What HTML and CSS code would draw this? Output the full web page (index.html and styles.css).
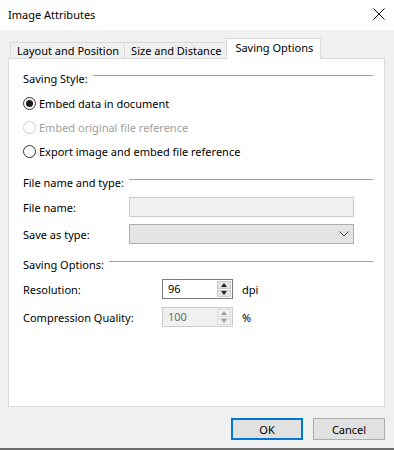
FILE: index.html
```html
<!DOCTYPE html>
<html lang="en">
<head>
    <meta charset="UTF-8">
    <title>Image Attributes</title>
    <link rel="stylesheet" href="styles.css">
</head>
<body>
    <div class="window">
        <div class="titlebar">
            <span class="title">Image Attributes</span>
            <svg class="close" width="12" height="12" viewBox="0 0 12 12">
                <path d="M0.5 0.5 L11.5 11.5 M11.5 0.5 L0.5 11.5" stroke="#000" stroke-width="1" fill="none"/>
            </svg>
        </div>

        <div class="body">
            <div class="tabs">
                <div class="tab">Layout and Position</div>
                <div class="tab">Size and Distance</div>
                <div class="tab active">Saving Options</div>
            </div>

            <div class="panel">
                <div class="group-header">
                    <span>Saving Style:</span>
                    <div class="rule"></div>
                </div>

                <div class="radios">
                    <label class="radio-row">
                        <span class="radio checked"></span>
                        <span>Embed data in document</span>
                    </label>
                    <label class="radio-row disabled">
                        <span class="radio"></span>
                        <span>Embed original file reference</span>
                    </label>
                    <label class="radio-row">
                        <span class="radio"></span>
                        <span>Export image and embed file reference</span>
                    </label>
                </div>

                <div class="group-header second">
                    <span>File name and type:</span>
                    <div class="rule"></div>
                </div>

                <div class="field-row first">
                    <span class="field-label">File name:</span>
                    <div class="text-box"></div>
                </div>
                <div class="field-row">
                    <span class="field-label">Save as type:</span>
                    <div class="combo">
                        <svg width="10" height="6" viewBox="0 0 10 6">
                            <path d="M0.5 0.5 L5 5 L9.5 0.5" stroke="#444" stroke-width="1" fill="none"/>
                        </svg>
                    </div>
                </div>

                <div class="group-header third">
                    <span>Saving Options:</span>
                    <div class="rule"></div>
                </div>

                <div class="field-row first">
                    <span class="field-label wide">Resolution:</span>
                    <div class="spin">
                        <span class="spin-value">96</span>
                        <div class="spin-buttons">
                            <span class="spin-btn"><i class="arrow up"></i></span>
                            <span class="spin-btn"><i class="arrow down"></i></span>
                        </div>
                    </div>
                    <span class="unit">dpi</span>
                </div>
                <div class="field-row spaced">
                    <span class="field-label wide">Compression Quality:</span>
                    <div class="spin disabled">
                        <span class="spin-value">100</span>
                        <div class="spin-buttons">
                            <span class="spin-btn"><i class="arrow up"></i></span>
                            <span class="spin-btn"><i class="arrow down"></i></span>
                        </div>
                    </div>
                    <span class="unit">%</span>
                </div>
            </div>

            <div class="buttons">
                <button class="btn default">OK</button>
                <button class="btn">Cancel</button>
            </div>
        </div>
    </div>
</body>
</html>
```

FILE: styles.css
```css
* {
    margin: 0;
    padding: 0;
    box-sizing: border-box;
}

body {
    font-family: "Noto Sans", "Open Sans", sans-serif;
    font-size: 11px;
    color: #000;
    background: #f0f0f0;
}

.window {
    width: 394px;
    height: 450px;
    display: flex;
    flex-direction: column;
    border-bottom: 2px solid #6b6b6b;
}

.titlebar {
    height: 30px;
    background: #ffffff;
    display: flex;
    align-items: center;
    justify-content: space-between;
    padding: 0 9px 2px 8px;
}

.body {
    flex: 1;
    background: #f0f0f0;
    padding-top: 8px;
}

.tabs {
    display: flex;
    align-items: flex-end;
    padding-left: 10px;
    height: 20px;
}

.tab {
    height: 16px;
    padding: 0 5px 0 6px;
    border: 1px solid #d9d9d9;
    border-bottom: none;
    border-right: none;
    line-height: 15px;
    background: #f0f0f0;
}

.tab.active {
    height: 21px;
    margin-bottom: -1px;
    padding: 0 7px 0 8px;
    background: #ffffff;
    border-right: 1px solid #d9d9d9;
    line-height: 18px;
    position: relative;
    z-index: 1;
}

.panel {
    height: 349px;
    margin: 0 9px 0 8px;
    background: #ffffff;
    border: 1px solid #d9d9d9;
    padding: 10px 11px 0 14px;
}

.group-header {
    height: 16px;
    display: flex;
    align-items: center;
    gap: 5px;
    padding-top: 2px;
}

.group-header.second {
    margin-top: 10px;
}

.group-header.third {
    margin-top: 11px;
}

.rule {
    flex: 1;
    height: 1px;
    background: #a0a0a0;
    margin-bottom: 5px;
}

.radios {
    margin-top: 6px;
}

.radio-row {
    height: 24px;
    display: flex;
    align-items: center;
    gap: 3px;
}

.radio {
    width: 13px;
    height: 13px;
    border: 1px solid #333;
    border-radius: 50%;
    display: flex;
    align-items: center;
    justify-content: center;
}

.radio.checked::after {
    content: "";
    width: 7px;
    height: 7px;
    border-radius: 50%;
    background: #1a1a1a;
}

.radio-row.disabled {
    color: #a0a0a0;
}

.radio-row.disabled .radio {
    border-color: #cccccc;
}

.field-row {
    height: 20px;
    display: flex;
    align-items: center;
    margin-top: 7px;
}

.field-row.first {
    margin-top: 8px;
}

.field-row.spaced {
    margin-top: 8px;
}

.field-label {
    width: 106px;
    flex-shrink: 0;
}

.field-label.wide {
    width: 139px;
}

.text-box {
    width: 225px;
    height: 20px;
    background: #f0f0f0;
    border: 1px solid #cccccc;
}

.combo {
    width: 225px;
    height: 20px;
    background: #e5e5e5;
    border: 1px solid #adadad;
    display: flex;
    align-items: center;
    justify-content: flex-end;
    padding-right: 4px;
}

.spin {
    width: 71px;
    height: 20px;
    border: 1px solid #7a7a7a;
    display: flex;
    align-items: stretch;
    background: #ffffff;
}

.spin-value {
    flex: 1;
    padding-left: 5px;
    line-height: 18px;
}

.spin-buttons {
    width: 16px;
    padding: 1px;
    display: flex;
    flex-direction: column;
    gap: 1px;
}

.spin-btn {
    flex: 1;
    background: #e5e5e5;
    border: 1px solid #cccccc;
    display: flex;
    align-items: center;
    justify-content: center;
}

.arrow {
    width: 0;
    height: 0;
    border-left: 3px solid transparent;
    border-right: 3px solid transparent;
}

.arrow.up {
    border-bottom: 4px solid #222;
}

.arrow.down {
    border-top: 4px solid #222;
}

.spin.disabled {
    background: #f0f0f0;
    border-color: #cccccc;
    color: #6d6d6d;
}

.spin.disabled .spin-btn {
    background: #f0f0f0;
    border-color: #dcdcdc;
}

.spin.disabled .arrow.up {
    border-bottom-color: #a0a0a0;
}

.spin.disabled .arrow.down {
    border-top-color: #a0a0a0;
}

.unit {
    margin-left: 9px;
}

.buttons {
    display: flex;
    justify-content: flex-end;
    gap: 10px;
    padding: 11px 9px 0 0;
}

.btn {
    width: 72px;
    height: 22px;
    font-family: inherit;
    font-size: 11px;
    background: #e1e1e1;
    border: 1px solid #adadad;
    color: #000;
}

.btn.default {
    border: 2px solid #0078d7;
}
```
